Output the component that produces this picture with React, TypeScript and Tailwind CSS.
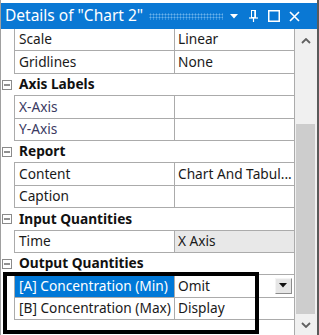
import React from 'react';

type Row = {
  kind: 'cat' | 'prop';
  name: string;
  value?: string;
  dim?: boolean;
  readonly?: boolean;
  selected?: boolean;
  dropdown?: boolean;
};

const ROWS: Row[] = [
  { kind: 'prop', name: 'Scale', value: 'Linear' },
  { kind: 'prop', name: 'Gridlines', value: 'None' },
  { kind: 'cat', name: 'Axis Labels' },
  { kind: 'prop', name: 'X-Axis', value: '', dim: true },
  { kind: 'prop', name: 'Y-Axis', value: '', dim: true },
  { kind: 'cat', name: 'Report' },
  { kind: 'prop', name: 'Content', value: 'Chart And Tabul...' },
  { kind: 'prop', name: 'Caption', value: '' },
  { kind: 'cat', name: 'Input Quantities' },
  { kind: 'prop', name: 'Time', value: 'X Axis', readonly: true },
  { kind: 'cat', name: 'Output Quantities' },
  { kind: 'prop', name: '[A] Concentration (Min)', value: 'Omit', selected: true, dropdown: true },
  { kind: 'prop', name: '[B] Concentration (Max)', value: 'Display' },
];

// small boxed minus used for collapsing a category
const MinusBox = () => (
  <svg width="10" height="10" viewBox="0 0 10 10" className="block">
    <rect x="0.5" y="0.5" width="9" height="9" fill="#fff" stroke="#8a8a8a" />
    <line x1="2" y1="5" x2="8" y2="5" stroke="#222" strokeWidth="1" />
  </svg>
);

const DropButton = () => (
  <div className="w-[17px] h-[16px] bg-[#e6e6e6] border border-t-[#f4f4f4] border-l-[#f4f4f4] border-r-[#8c8c8c] border-b-[#8c8c8c] flex items-center justify-center">
    <svg width="8" height="5" viewBox="0 0 8 5">
      <polygon points="0,0 8,0 4,4.5" fill="#111" />
    </svg>
  </div>
);

const TitleBar = () => (
  <div className="h-[26px] bg-[#0a78d4] flex items-center pl-[4px] pr-[4px]">
    <span className="text-white text-[15.5px] leading-none whitespace-nowrap">Details of "Chart 2"</span>
    <div className="ml-[6px] mr-[6px] flex-1 h-[7px] bg-[radial-gradient(circle,#6cb2ea_0.9px,transparent_1.1px)] bg-[length:3px_3px]" />
    {/* window chrome: menu, pin, maximize, close */}
    <svg width="8" height="5" viewBox="0 0 8 5" className="ml-[1px]">
      <polygon points="0,0 8,0 4,4.5" fill="#fff" />
    </svg>
    <svg width="9" height="12" viewBox="0 0 9 12" className="ml-[11px]">
      <rect x="2.5" y="0.5" width="4" height="7" fill="none" stroke="#fff" />
      <line x1="6" y1="1" x2="6" y2="7" stroke="#fff" strokeWidth="1.5" />
      <line x1="0" y1="8" x2="9" y2="8" stroke="#fff" strokeWidth="1.2" />
      <line x1="4.5" y1="8" x2="4.5" y2="12" stroke="#fff" strokeWidth="1.2" />
    </svg>
    <svg width="12" height="12" viewBox="0 0 12 12" className="ml-[10px]">
      <rect x="0.75" y="0.75" width="10.5" height="10.5" fill="none" stroke="#fff" strokeWidth="1.5" />
    </svg>
    <svg width="11" height="11" viewBox="0 0 11 11" className="ml-[9px] mr-[13px]">
      <path d="M1 1 L10 10 M10 1 L1 10" stroke="#fff" strokeWidth="1.6" />
    </svg>
  </div>
);

const Scrollbar = () => (
  <div className="w-[24px] bg-[#f0f0f0] flex flex-col items-center">
    <svg width="10" height="6" viewBox="0 0 10 6" className="mt-[9px]">
      <path d="M1 5 L5 1 L9 5" fill="none" stroke="#606060" strokeWidth="1.8" />
    </svg>
    <div className="w-[19px] h-[190px] bg-[#cdcdcd] mt-[80px]" />
    <svg width="10" height="6" viewBox="0 0 10 6" className="mt-[8px]">
      <path d="M1 1 L5 5 L9 1" fill="none" stroke="#606060" strokeWidth="1.8" />
    </svg>
  </div>
);

const GridRow = ({ row }: { row: Row }) => {
  if (row.kind === 'cat') {
    return (
      <div className="flex h-[22.4px]">
        <div className="w-[13px] flex items-center pl-[1px]">
          <MinusBox />
        </div>
        <div className="flex-1 flex items-center border-b border-[#ababab] pl-[5px] font-bold text-[#111]">
          {row.name}
        </div>
      </div>
    );
  }
  return (
    <div className="flex h-[22.4px]">
      <div className="w-[13px]" />
      <div className="flex-1 flex border-b border-l border-[#ababab]">
        <div
          className={
            'w-[160px] shrink-0 flex items-center pl-[4px] border-r border-[#ababab] whitespace-nowrap overflow-hidden ' +
            (row.selected ? 'bg-[#0078d7] text-white' : row.dim ? 'text-[#3a3a62]' : 'text-[#1a1a1a]')
          }
        >
          {row.name}
        </div>
        <div
          className={
            'flex-1 flex items-center pl-[3px] pr-[2px] whitespace-nowrap overflow-hidden text-[#1a1a1a] ' +
            (row.readonly ? 'bg-[#e8e8e8]' : 'bg-white')
          }
        >
          <span className="flex-1">{row.value}</span>
          {row.dropdown && <DropButton />}
        </div>
      </div>
    </div>
  );
};

export default function App() {
  return (
    <div className="relative w-[319px] h-[335px] bg-white border-l border-l-[#a0a0a0] border-r-2 border-r-[#5a5a5a] pt-[3px] flex flex-col overflow-hidden text-[13.7px] font-['Noto_Sans',sans-serif]">
      <TitleBar />
      <div className="flex flex-1">
        <div className="flex-1 border-r border-[#ababab]">
          {ROWS.map((r) => (
            <GridRow key={r.name} row={r} />
          ))}
        </div>
        <Scrollbar />
      </div>
      {/* highlight annotation drawn over the grid */}
      <div className="absolute left-[2px] top-[272px] w-[256px] h-[62px] border-[4px] border-black" />
    </div>
  );
}
